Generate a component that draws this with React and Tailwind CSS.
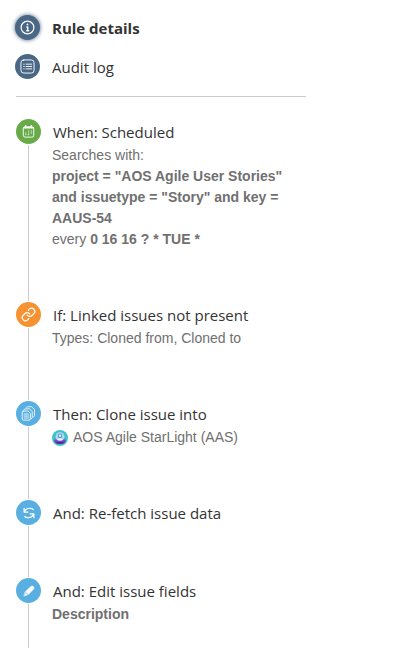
// Sidebar of an automation rule: links on top, then the chain of steps.
import { Link } from "lucide-react";

const sub = "font-['Liberation_Sans',Arial,sans-serif] text-sm leading-[21px] text-[#707070]";

function Glyph({ size = 15, width = 1, children }) {
  return (
    <svg width={size} height={size} viewBox="0 0 16 16" fill="none" stroke="white" strokeWidth={width} strokeLinecap="round" strokeLinejoin="round" aria-hidden="true">
      {children}
    </svg>
  );
}

function InfoIcon() {
  return (
    <Glyph width={1.3}>
      <circle cx="8" cy="8" r="6.8" />
      <path d="M8.2 7.4v4M7.2 7.4h1M7.2 11.4h2" strokeWidth="1.5" />
      <circle cx="8" cy="4.7" r="1" fill="white" stroke="none" />
    </Glyph>
  );
}

function LogIcon() {
  return (
    <Glyph>
      <rect x="1" y="1" width="14" height="14" rx="3" />
      <path d="M4 5.5h.5M4 8h.5M4 10.5h.5M6.5 5.5h6M6.5 8h6M6.5 10.5h6" />
    </Glyph>
  );
}

function CalendarIcon() {
  return (
    <Glyph size={15}>
      <rect x="2.4" y="3" width="11.2" height="11" rx="2" />
      <path d="M3 3.9h10" strokeWidth="1.6" />
      <path d="M5 1.7v2M11 1.7v2" strokeWidth="1.4" />
      <path d="M8 7.5h.3M11 7.5h.3M5 9.5h.3M8 9.5h.3M11 9.5h.3M5 11.5h.3M8 11.5h.3" strokeWidth="1.1" />
    </Glyph>
  );
}

function CopyIcon() {
  return (
    <Glyph size={15} width={0.9}>
      <path d="M2.8 5.3h4.6L10 7.8v6a1.3 1.3 0 0 1-1.3 1.3H2.6a1.3 1.3 0 0 1-1.3-1.3V6.7a1.4 1.4 0 0 1 1.5-1.4z" />
      <path d="M3.4 8.6h4.2M3.4 10.7h4.6M3.4 12.8h4.6" />
      <path d="M3.4 3.7c.2-.5.7-.7 1.2-.7h4.3L12 5.8v6.4c0 .7-.4 1.1-1 1.4" />
      <path d="M5.6 1.5c.3-.5.7-.7 1.3-.7h4.3l3.2 2.9v6.5c0 .7-.4 1.1-1 1.4" />
    </Glyph>
  );
}

function RefreshIcon() {
  return (
    <Glyph size={14} width={1.4}>
      <path d="M2.4 2.6v4.3h4.3M2.8 6.5C4 3.6 7 2.4 9.6 2.6c1.4.1 2.5.6 3.2 1.4" />
      <path d="M13.6 13.4V9.1H9.3M13.2 9.5c-1.2 2.9-4.2 4.1-6.8 3.9-1.4-.1-2.5-.6-3.2-1.4" />
    </Glyph>
  );
}

function PencilIcon() {
  return (
    <Glyph size={14}>
      <path d="M4.2 8.8l5.7-5.7a2 2 0 0 1 3 3L7.2 11.8z" fill="white" />
      <path d="M3.3 9.9l2.8 2.8-3.7 1z" fill="white" strokeWidth=".5" />
    </Glyph>
  );
}

function ProjectAvatar() {
  return (
    <svg width="16" height="16" viewBox="0 0 16 16" className="shrink-0" aria-hidden="true">
      <circle cx="8" cy="8" r="8" fill="#3fc1c9" />
      <path d="M2.4 9.4h11.2l.4 1.8c-1.2 2-3.5 2.8-6 2.8s-4.8-.8-6-2.8z" fill="#7a45c8" />
      <path d="M3.4 12h9.2c-1.2 1.4-2.8 2-4.6 2s-3.4-.6-4.6-2z" fill="#4b2a94" />
      <circle cx="8" cy="6.6" r="4.4" fill="#b5d9f5" />
      <circle cx="8" cy="5.9" r="2.3" fill="#4a8fd0" />
      <circle cx="8" cy="5.7" r="1.3" fill="#e8f5ff" />
      <path d="M5.2 10c.4-1.3 1.4-1.8 2.8-1.8s2.4.5 2.8 1.8z" fill="#f3f0ff" />
    </svg>
  );
}

const steps = [
  {
    title: "When: Scheduled",
    color: "bg-[#67ab49]",
    icon: <CalendarIcon />,
    body: (
      <>
        <p>Searches with:</p>
        <p className="font-bold">project = "AOS Agile User Stories" and issuetype = "Story" and key = AAUS-54</p>
        <p>every <b>0 16 16 ? * TUE *</b></p>
      </>
    ),
  },
  {
    title: "If: Linked issues not present",
    color: "bg-[#f79232]",
    icon: <Link size={15} strokeWidth={2} className="text-white" aria-hidden="true" />,
    body: <p>Types: Cloned from, Cloned to</p>,
  },
  {
    title: "Then: Clone issue into",
    color: "bg-[#59afe1]",
    icon: <CopyIcon />,
    body: <p className="flex items-center gap-[5px]"><ProjectAvatar />AOS Agile StarLight (AAS)</p>,
  },
  { title: "And: Re-fetch issue data", color: "bg-[#59afe1]", icon: <RefreshIcon /> },
  { title: "And: Edit issue fields", color: "bg-[#59afe1]", icon: <PencilIcon />, body: <p className="font-bold">Description</p> },
];

function Step({ title, color, icon, body }) {
  return (
    <li className="flex gap-[11px]">
      <div className="flex flex-col items-center gap-px">
        <span className={`grid size-[25px] shrink-0 place-items-center rounded-full ${color}`}>{icon}</span>
        <span className="mb-px w-px grow bg-[#cccccc]" />
      </div>
      <div className="min-w-0 flex-1 pb-[52px]">
        <h2 className="pl-px text-[15px] leading-[26px] text-[#333333]">{title}</h2>
        {body && <div className={sub}>{body}</div>}
      </div>
    </li>
  );
}

export default function App() {
  return (
    <main className="min-h-screen bg-white px-4 pt-[15px] font-['Open_Sans','Noto_Sans',sans-serif] text-[#333333]">
      <div className="max-w-[290px]">
        <nav className="border-b border-[#cccccc] pb-4 text-[15px] leading-[26px]">
          <div className="-ml-px flex flex-col gap-[13px]">
            <a href="#details" className="flex gap-3 font-bold">
              <span className="grid size-[25px] place-items-center rounded-full bg-[#4a6785] shadow-[0_0_4px_#4a6785]"><InfoIcon /></span>
              Rule details
            </a>
            <a href="#audit" className="flex gap-3">
              <span className="grid size-[25px] place-items-center rounded-full bg-[#4a6785]"><LogIcon /></span>
              Audit log
            </a>
          </div>
        </nav>
        <ol className="pt-[22px]">
          {steps.map((step) => <Step key={step.title} {...step} />)}
        </ol>
      </div>
    </main>
  );
}
